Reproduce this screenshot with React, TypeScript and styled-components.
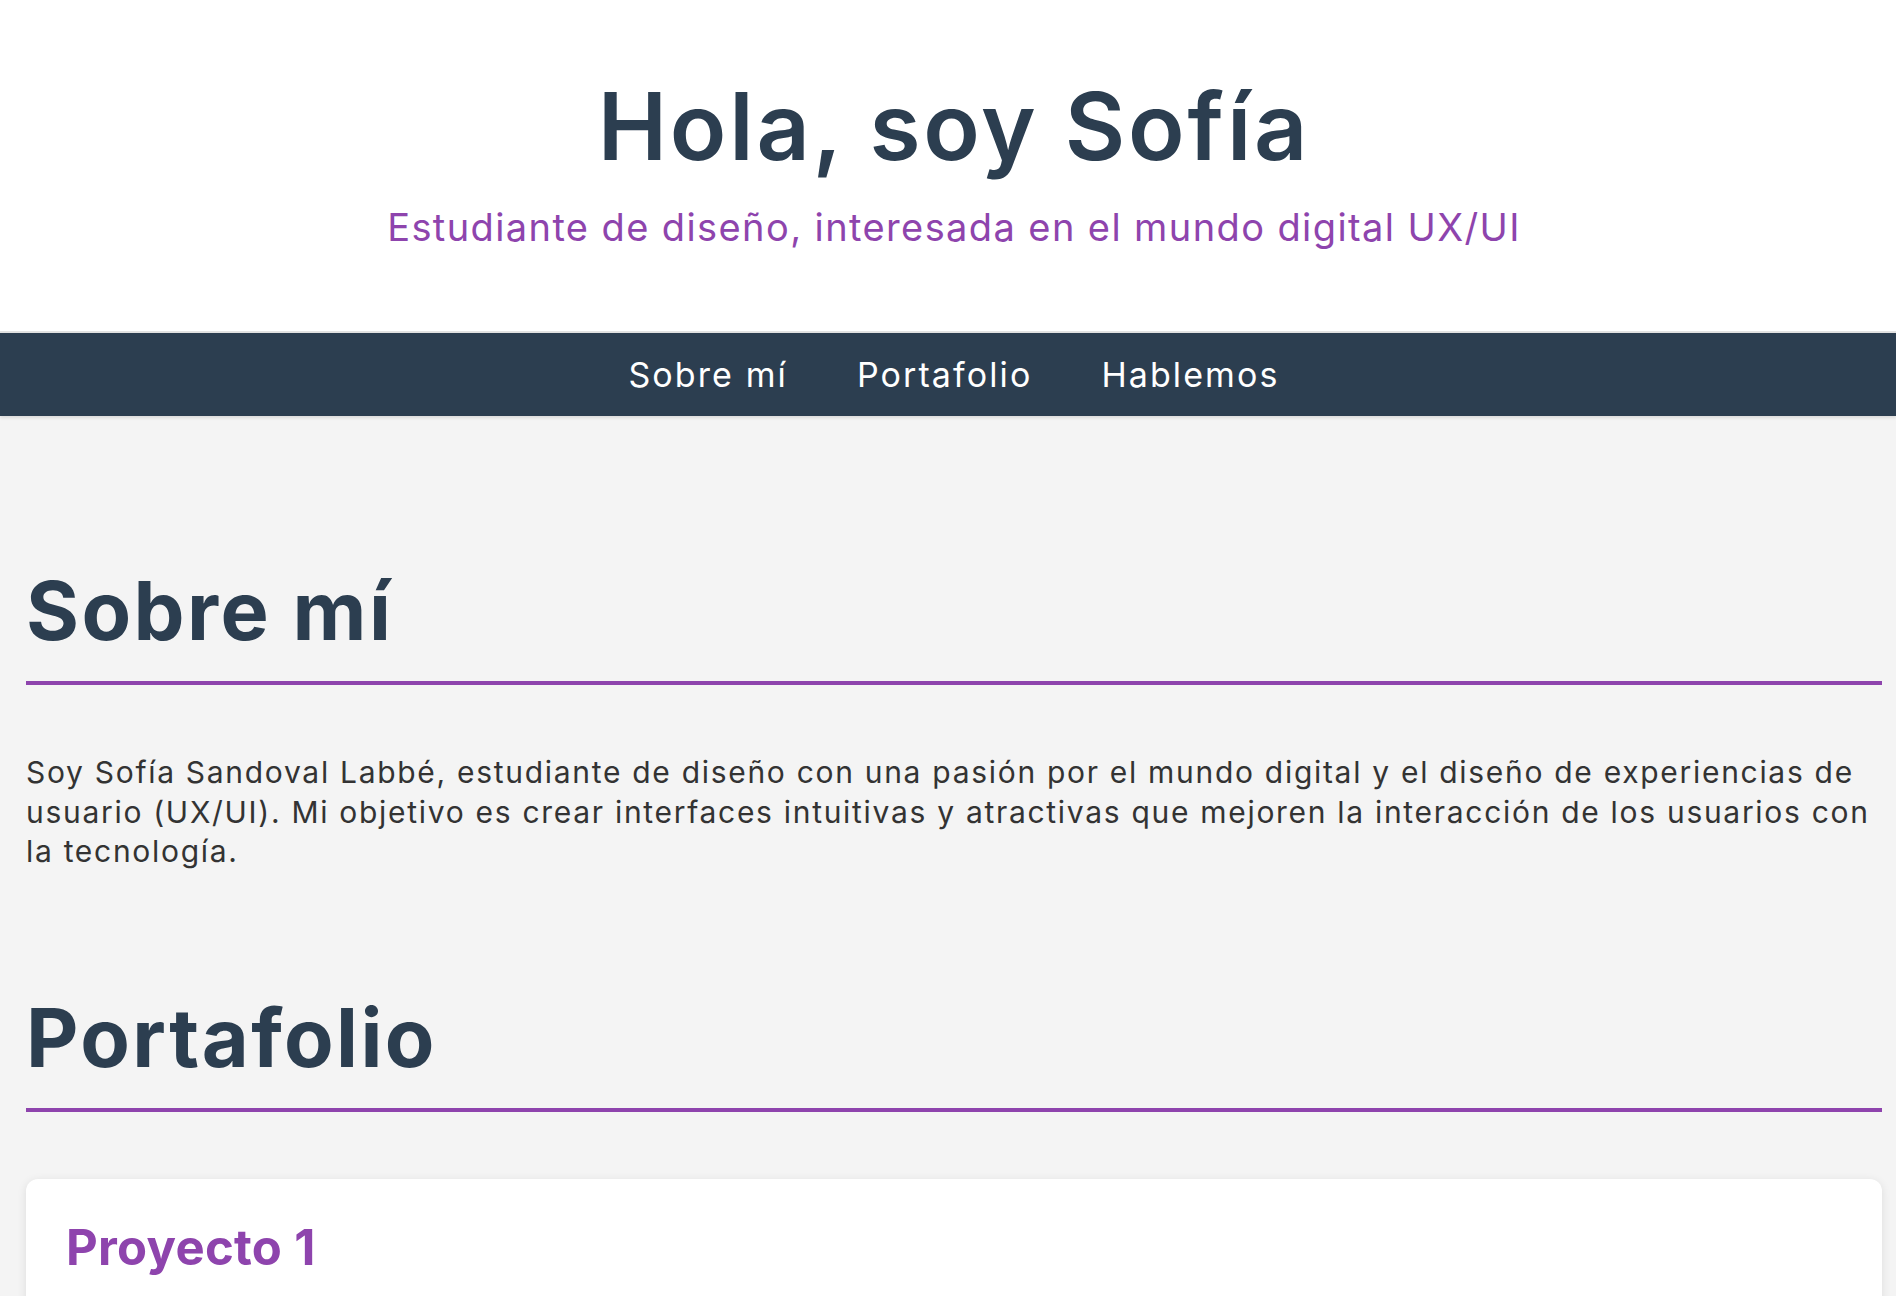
import React from 'react';
import styled, { createGlobalStyle } from 'styled-components';

const dark = '#2c3e50';
const purple = '#8e44ad';

const GlobalStyle = createGlobalStyle`
    html, body {
        margin: 0;
        padding: 0;
        background: #f4f4f4;
        font-family: Inter, "Noto Sans", "DejaVu Sans", sans-serif;
    }
`;

const Header = styled.header`
    background: #ffffff;
    padding: 71px 14px 81px 26px;
    text-align: center;
    border-bottom: 2px solid #e2e2e2;
`;

const Title = styled.h1`
    margin: 0;
    font-size: 93px;
    line-height: 1.2;
    font-weight: 600;
    letter-spacing: 2.8px;
    color: ${dark};
`;

const Subtitle = styled.p`
    margin: 22px 0 0;
    font-size: 38px;
    line-height: 1.2;
    font-weight: 400;
    letter-spacing: 1.4px;
    color: ${purple};
`;

const Nav = styled.nav`
    height: 83px;
    background: ${dark};
    box-shadow: 0 2px 3px rgba(0, 0, 0, 0.1);
    padding: 0 14px 0 26px;

    display: flex;
    align-items: center;
    justify-content: center;
    gap: 69px;
`;

const NavLink = styled.a`
    color: #ffffff;
    text-decoration: none;
    font-size: 34px;
    font-weight: 400;
    letter-spacing: 2.1px;
    cursor: pointer;
`;

const Main = styled.main`
    padding: 20px 14px 0 26px;
`;

const Section = styled.section`
    padding-top: 127px;

    & + & {
        padding-top: 118px;
    }
`;

const SectionTitle = styled.h2`
    margin: 0;
    padding-bottom: 21px;
    border-bottom: 4px solid ${purple};
    font-size: 81px;
    line-height: 1.2;
    font-weight: 700;
    letter-spacing: 2.4px;
    color: ${dark};
`;

const Text = styled.p`
    margin: 68px 0 0;
    font-size: 30px;
    line-height: 39.5px;
    letter-spacing: 1.7px;
    color: #333333;
`;

const Card = styled.article`
    margin-top: 67px;
    min-height: 260px;
    padding: 40px;
    background: #ffffff;
    border-radius: 12px;
    box-shadow: 0 2px 10px rgba(0, 0, 0, 0.1);
`;

const CardTitle = styled.h3`
    margin: 0;
    font-size: 49px;
    line-height: 1.2;
    font-weight: 700;
    letter-spacing: 0.3px;
    color: ${purple};
`;

const App = () => {
    return (
        <>
            <GlobalStyle />
            <Header>
                <Title>Hola, soy Sofía</Title>
                <Subtitle>Estudiante de diseño, interesada en el mundo digital UX/UI</Subtitle>
            </Header>
            <Nav>
                <NavLink href="#sobre-mi">Sobre mí</NavLink>
                <NavLink href="#portafolio">Portafolio</NavLink>
                <NavLink href="#hablemos">Hablemos</NavLink>
            </Nav>
            <Main>
                <Section id="sobre-mi">
                    <SectionTitle>Sobre mí</SectionTitle>
                    <Text>
                        Soy Sofía Sandoval Labbé, estudiante de diseño con una pasión por el mundo digital y el diseño de
                        experiencias de usuario (UX/UI). Mi objetivo es crear interfaces intuitivas y atractivas que mejoren
                        la interacción de los usuarios con la tecnología.
                    </Text>
                </Section>
                <Section id="portafolio">
                    <SectionTitle>Portafolio</SectionTitle>
                    <Card>
                        <CardTitle>Proyecto 1</CardTitle>
                    </Card>
                </Section>
            </Main>
        </>
    );
};

export default App;
